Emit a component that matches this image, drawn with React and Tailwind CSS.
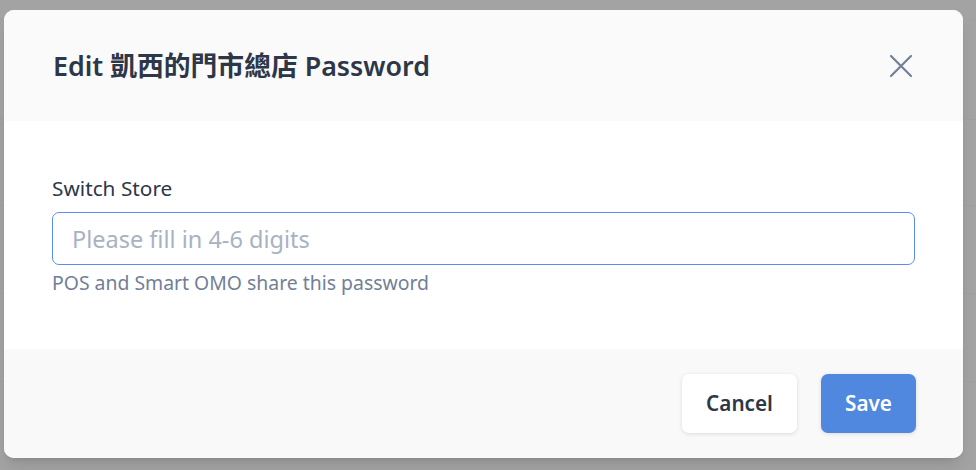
const App = () => {
  return (
    <div
      className="relative w-[976px] h-[470px] overflow-hidden bg-[#a3a3a3]"
      style={{ fontFamily: '"Noto Sans", "Noto Sans CJK TC", sans-serif' }}
    >
      {/* page behind the overlay */}
      <div className="flex flex-col">
        <div className="h-[20px] border-b border-[#9aa1aa]" />
        <div className="h-[100px] border-b border-[#9c9fa4]" />
        <div className="h-[86px] border-b border-[#9c9fa4]" />
        <div className="h-[88px] border-b border-[#9c9fa4]" />
        <div className="h-[88px] border-b border-[#9c9fa4]" />
      </div>

      {/* dialog */}
      <div className="absolute left-[4px] top-[10px] w-[959px] h-[448px] rounded-[10px] overflow-hidden flex flex-col bg-white shadow-lg">
        <div className="h-[111px] bg-[#fafafa] flex items-center justify-between pl-[49px] pr-[50px]">
          <h2 className="text-[26.8px] font-semibold text-[#2d3748] pt-[1px]">
            Edit 凱西的門市總店 Password
          </h2>
          <button className="w-[24px] h-[24px] flex items-center justify-center text-[#718096]">
            <svg width="24" height="24" viewBox="0 0 24 24" fill="none">
              <path
                d="M2 2 22 22 M22 2 2 22"
                stroke="currentColor"
                strokeWidth="2.2"
                strokeLinecap="round"
              />
            </svg>
          </button>
        </div>

        <div className="h-[228px] bg-white px-[48px] pt-[53px]">
          <label className="block text-[20.8px] leading-[28px] text-[#2d3748]">
            Switch Store
          </label>
          <input
            type="password"
            placeholder="Please fill in 4-6 digits"
            className="mt-[10px] w-full h-[53px] rounded-[7px] border border-[#5b8def] px-[19px] text-[23.5px] text-[#2d3748] placeholder:text-[#a9b2c3] outline-none bg-white"
          />
          <p className="mt-[5px] text-[19.4px] leading-[26px] text-[#718096]">
            POS and Smart OMO share this password
          </p>
        </div>

        <div className="flex-1 bg-[#f9f9f9] flex items-center justify-end gap-[24px] pr-[47px]">
          <button className="w-[115px] h-[59px] rounded-[7px] bg-white text-[20.7px] font-semibold text-[#2d3748] shadow-[0_1px_4px_rgba(0,0,0,0.12)]">
            Cancel
          </button>
          <button className="w-[95px] h-[59px] rounded-[7px] bg-[#5088e0] text-[20.7px] font-semibold text-white shadow-[0_1px_4px_rgba(0,0,0,0.12)]">
            Save
          </button>
        </div>
      </div>
    </div>
  );
};

export default App;
